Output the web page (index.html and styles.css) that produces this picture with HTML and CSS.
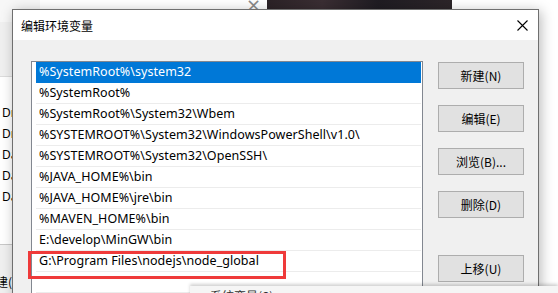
FILE: index.html
```html
<!DOCTYPE html>
<html lang="zh-CN">
<head>
<meta charset="utf-8">
<link rel="stylesheet" href="styles.css">
</head>
<body>
<div class="scene">
  <div class="backwin">
    <div class="bw-top"></div>
    <div class="bw-head"></div>
    <div class="bw-list">
      <div class="bw-row">Dr</div>
      <div class="bw-row">Dr</div>
      <div class="bw-row">Da</div>
      <div class="bw-row">Da</div>
      <div class="bw-row">Da</div>
    </div>
    <div class="bw-foot">建(</div>
  </div>
  <div class="photo"></div>
  <div class="back-x">×</div>

  <div class="dialog">
    <div class="titlebar">
      <span class="title">编辑环境变量</span>
      <svg class="close" width="11" height="11" viewBox="0 0 11 11"><path d="M0.5 0.5L10.5 10.5M10.5 0.5L0.5 10.5" stroke="#000" stroke-width="1.1" fill="none"/></svg>
    </div>
    <div class="body">
      <div class="list">
        <div class="row sel">%SystemRoot%\system32</div>
        <div class="row">%SystemRoot%</div>
        <div class="row">%SystemRoot%\System32\Wbem</div>
        <div class="row">%SYSTEMROOT%\System32\WindowsPowerShell\v1.0\</div>
        <div class="row">%SYSTEMROOT%\System32\OpenSSH\</div>
        <div class="row">%JAVA_HOME%\bin</div>
        <div class="row">%JAVA_HOME%\jre\bin</div>
        <div class="row">%MAVEN_HOME%\bin</div>
        <div class="row">E:\develop\MinGW\bin</div>
        <div class="row">G:\Program Files\nodejs\node_global</div>
        <div class="row"></div>
      </div>
      <div class="buttons">
        <div class="btn">新建(N)</div>
        <div class="btn">编辑(E)</div>
        <div class="btn">浏览(B)...</div>
        <div class="btn">删除(D)</div>
        <div class="btn gap">上移(U)</div>
      </div>
    </div>
  </div>

  <div class="highlight"></div>
  <div class="strip"><span>系统变量(S)</span></div>
</div>
</body>
</html>
```
FILE: styles.css
```css
html, body {
  margin: 0;
  padding: 0;
}
body {
  width: 558px;
  height: 293px;
  overflow: hidden;
  background: #ffffff;
  font-family: "Noto Sans", "Noto Sans CJK SC", sans-serif;
  font-size: 12px;
  color: #000;
}
.scene {
  position: relative;
  width: 558px;
  height: 293px;
  overflow: hidden;
}

/* background window on the left */
.backwin {
  position: absolute;
  left: 0;
  top: 0;
  width: 40px;
  height: 293px;
  display: flex;
  flex-direction: column;
  background: #ffffff;
}
.bw-top {
  height: 22px;
  background: #f7f7f7;
}
.bw-head {
  height: 55px;
  background: #f0f0f0;
  border-bottom: 1px solid #dcdcdc;
  box-sizing: border-box;
}
.bw-list {
  height: 168px;
  padding-top: 25px;
  box-sizing: border-box;
  background: #fff;
  border-bottom: 1px solid #c8c8c8;
}
.bw-row {
  height: 21px;
  line-height: 21px;
  padding-left: 2px;
  font-size: 12px;
}
.bw-foot {
  flex: 1;
  background: #f0f0f0;
  padding-top: 29px;
  line-height: 16px;
  font-family: "Noto Sans CJK SC", sans-serif;
  margin-left: -4px;
}
.photo {
  position: absolute;
  left: 267px;
  top: 0;
  width: 185px;
  height: 10px;
  background: linear-gradient(90deg, #2b2226 0%, #3a2e33 30%, #1f1c22 60%, #2c2529 100%);
}
.back-x {
  position: absolute;
  left: 246px;
  top: -6px;
  font-size: 18px;
  color: #8a8a8a;
  font-family: "DejaVu Sans", sans-serif;
}

/* dialog */
.dialog {
  position: absolute;
  left: 12px;
  top: 9px;
  width: 527px;
  height: 300px;
  border: 1px solid #6f6f6f;
  box-sizing: border-box;
  background: #f0f0f0;
  box-shadow: 2px 2px 12px rgba(0,0,0,0.28);
  display: flex;
  flex-direction: column;
}
.titlebar {
  height: 30px;
  background: #ffffff;
  display: flex;
  align-items: center;
  justify-content: space-between;
  padding: 0 10px 0 8px;
  flex: none;
}
.title {
  font-family: "Noto Sans CJK SC", sans-serif;
  font-size: 12px;
  padding-top: 1px;
}
.close {
  display: block;
  margin-right: 0;
}
.body {
  display: flex;
  padding: 21px 0 0 18px;
  gap: 15px;
}
.list {
  width: 392px;
  height: 240px;
  border: 1px solid #828790;
  border-bottom: none;
  box-sizing: border-box;
  background: #ffffff;
  padding: 0 1px 0 4px;
}
.row {
  height: 21px;
  line-height: 20px;
  border-bottom: 1px solid #ececec;
  box-sizing: border-box;
  padding-left: 3px;
  white-space: nowrap;
  font-family: "Noto Sans", sans-serif;
  font-size: 12.5px;
  letter-spacing: 0.05px;
}
.row.sel {
  background: #0078d7;
  color: #ffffff;
  border-bottom-color: #0078d7;
}
.buttons {
  display: flex;
  flex-direction: column;
  gap: 16px;
  padding-top: 1px;
}
.btn {
  width: 86px;
  height: 27px;
  box-sizing: border-box;
  background: #e1e1e1;
  border: 1px solid #adadad;
  display: flex;
  align-items: center;
  justify-content: center;
  font-family: "Noto Sans CJK SC", sans-serif;
  font-size: 12px;
}
.btn.gap {
  margin-top: 21px;
}

/* red highlight rectangle (annotation overlay) */
.highlight {
  position: absolute;
  left: 28px;
  top: 251px;
  width: 258px;
  height: 28px;
  border: 3px solid #ef3a3a;
  box-sizing: border-box;
}

/* window peeking in at the very bottom */
.strip {
  position: absolute;
  left: 190px;
  top: 286px;
  width: 368px;
  height: 12px;
  background: #f5f5f5;
  box-shadow: 0 -2px 3px rgba(0,0,0,0.18);
  overflow: hidden;
}
.strip span {
  position: absolute;
  left: 20px;
  top: 1px;
  font-family: "Noto Sans CJK SC", sans-serif;
  font-size: 12px;
  color: #333;
}
```
